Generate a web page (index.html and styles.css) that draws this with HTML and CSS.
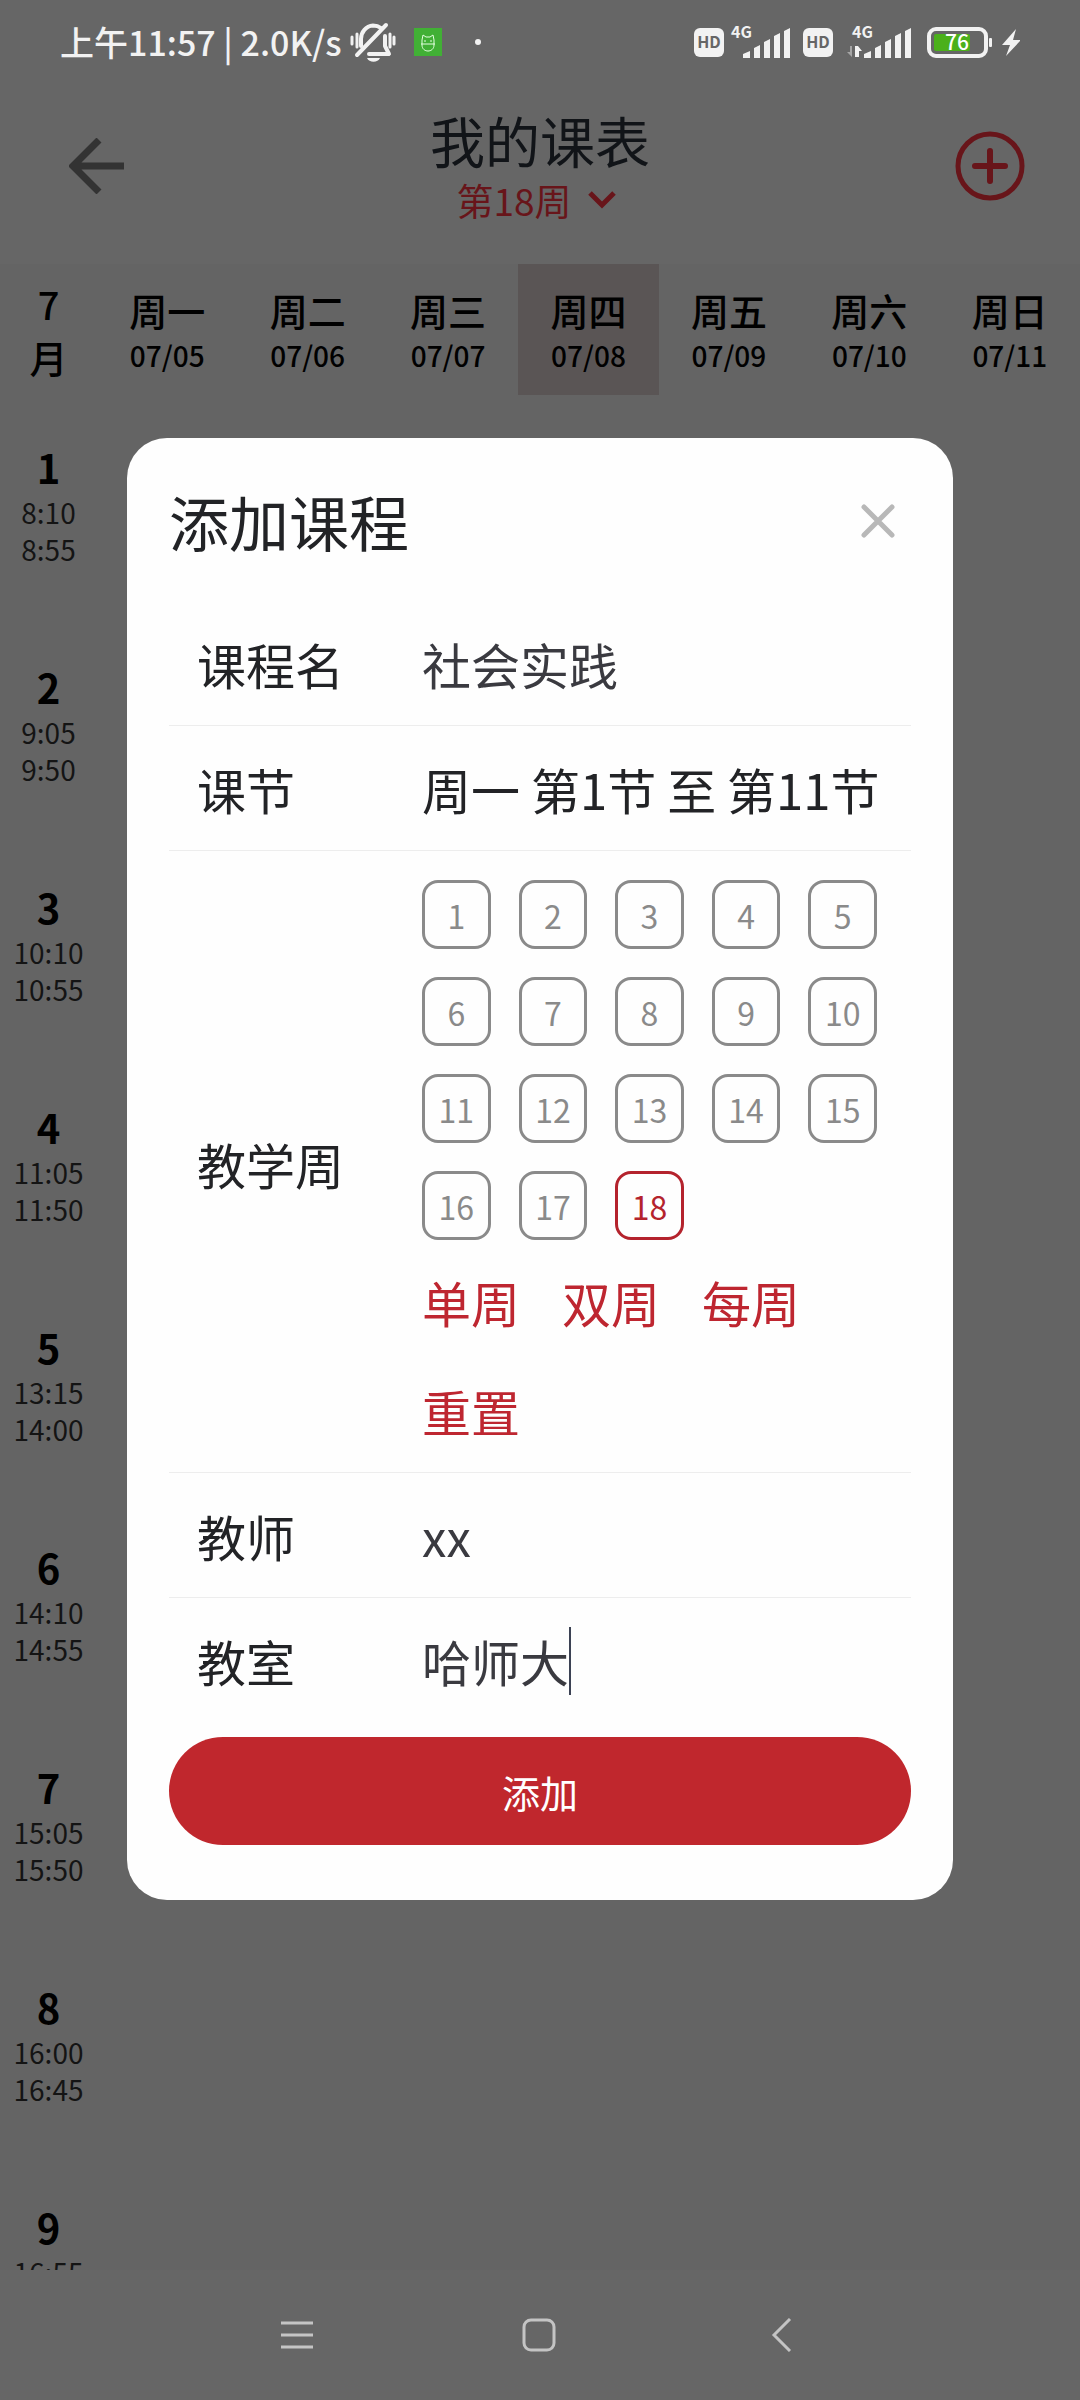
FILE: index.html
```html
<!DOCTYPE html>
<html lang="zh-CN">
<head>
<meta charset="utf-8">
<meta name="viewport" content="width=device-width, initial-scale=1">
<title>我的课表</title>
<link rel="stylesheet" href="styles.css">
</head>
<body>
<div class="screen">
  <div class="status">
    <div class="status-left">
      <span class="clock">上午11:57 | 2.0K/s</span>
      <svg class="bell" viewBox="0 0 46 40" width="46" height="40" fill="none" stroke="#f2f2f2" stroke-width="4" stroke-linecap="round">
        <path d="M11 24V17C11 10 16 4 23 3.500C26 3.500 29 4.500 31 6M35 14V24L39 32H19" stroke-linejoin="round"/>
        <path d="M36 3L7 33"/>
        <path d="M2 15V22M7 12V25M40 12V25M44 15V22" stroke-width="3"/>
        <path d="M17 36H30C28 41 19 41 17 36Z" fill="#f2f2f2" stroke="none"/>
      </svg>
      <svg class="app" viewBox="0 0 28 28" width="28" height="28" fill="none" stroke="#e4ffe0" stroke-width="1">
        <rect width="28" height="28" fill="#41b035" stroke="none"/>
        <path d="M8 12L9 7L12 9H16L19 7L20 12V17C20 21 17 23 14 23S8 21 8 17ZM7 16H21M11 12V14M17 12V14"/>
      </svg>
      <span class="dot"></span>
    </div>
    <svg class="signals" viewBox="0 0 330 44" width="330" height="44">
      <g fill="#f2f2f2">
        <rect x="4" y="8" width="30" height="29" rx="6"/>
        <rect x="113" y="8" width="30" height="29" rx="6"/>
        <text x="41" y="18" class="net">4G</text>
        <text x="162" y="18" class="net">4G</text>
        <path id="bars" d="M53 38V34L60 31V38ZM64 38V28L70 25V38ZM74 38V22L80 19V38ZM84 38V16L90 13V38ZM94 38V11L100 8V38Z"/>
        <use href="#bars" x="121"/>
        <path d="M165 37V26H168L172 31H169V37Z"/>
        <path d="M162 26V37L157 32H160V26Z" opacity=".45"/>
        <rect x="299" y="18" width="3" height="9" rx="1"/>
        <path d="M326 9L312 25H320L316 36L331 20H323Z"/>
      </g>
      <text x="19" y="28" class="hd">HD</text>
      <text x="128" y="28" class="hd">HD</text>
      <rect x="239" y="9" width="57" height="27" rx="7" fill="none" stroke="#f2f2f2" stroke-width="4"/>
      <rect x="244" y="14" width="36" height="17" rx="2" fill="#4bb01b"/>
      <text x="267" y="30" class="charge">76</text>
    </svg>
  </div>

  <header class="topbar">
    <button class="icon-button back" aria-label="返回">
      <svg viewBox="0 0 56 56" width="56" height="56" fill="none" stroke="#333" stroke-width="7"><path d="M30 2L4 28L30 54M4 28H55"/></svg>
    </button>
    <div class="heading">
      <h1>我的课表</h1>
      <button class="week-switch">第18周
        <svg viewBox="0 0 28 20" width="28" height="20" fill="none" stroke="#68151a" stroke-width="5"><path d="M2 3L14 15L26 3"/></svg>
      </button>
    </div>
    <button class="icon-button" aria-label="添加课程">
      <svg viewBox="0 0 72 72" width="72" height="72" fill="none" stroke="#68151a" stroke-width="5"><circle cx="36" cy="36" r="32"/><path d="M36 21V51M21 36H51" stroke-width="6" stroke-linecap="round"/></svg>
    </button>
  </header>

  <main class="timetable">
    <table>
      <thead>
        <tr>
          <th class="month">7<br>月</th>
          <th>周一<small>07/05</small></th>
          <th>周二<small>07/06</small></th>
          <th>周三<small>07/07</small></th>
          <th class="today">周四<small>07/08</small></th>
          <th>周五<small>07/09</small></th>
          <th>周六<small>07/10</small></th>
          <th>周日<small>07/11</small></th>
        </tr>
      </thead>
      <tbody>
        <tr><th>1<small>8:10<br>8:55</small></th><td colspan="7"></td></tr>
        <tr><th>2<small>9:05<br>9:50</small></th><td colspan="7"></td></tr>
        <tr><th>3<small>10:10<br>10:55</small></th><td colspan="7"></td></tr>
        <tr><th>4<small>11:05<br>11:50</small></th><td colspan="7"></td></tr>
        <tr><th>5<small>13:15<br>14:00</small></th><td colspan="7"></td></tr>
        <tr><th>6<small>14:10<br>14:55</small></th><td colspan="7"></td></tr>
        <tr><th>7<small>15:05<br>15:50</small></th><td colspan="7"></td></tr>
        <tr><th>8<small>16:00<br>16:45</small></th><td colspan="7"></td></tr>
        <tr><th>9<small>16:55</small></th><td colspan="7"></td></tr>
      </tbody>
    </table>
  </main>

  <nav class="system-nav">
    <button aria-label="最近任务"><svg viewBox="0 0 32 34" width="32" height="34" stroke="#c4c4c4" stroke-width="3"><path d="M0 5H32M0 17H32M0 29H32"/></svg></button>
    <button aria-label="主屏幕"><svg viewBox="0 0 34 34" width="34" height="34" fill="none" stroke="#c4c4c4" stroke-width="3"><rect x="2" y="2" width="30" height="30" rx="7"/></svg></button>
    <button aria-label="后退"><svg viewBox="0 0 34 34" width="34" height="34" fill="none" stroke="#c4c4c4" stroke-width="3"><path d="M25 1L9 17L25 33"/></svg></button>
  </nav>
</div>

<div class="overlay">
  <form class="dialog" role="dialog" aria-labelledby="dialog-title">
    <div class="dialog-head">
      <h2 id="dialog-title">添加课程</h2>
      <button type="button" class="icon-button" aria-label="关闭">
        <svg viewBox="0 0 34 34" width="34" height="34" stroke="#b8b8b8" stroke-width="5" stroke-linecap="round"><path d="M3 3L31 31M31 3L3 31"/></svg>
      </button>
    </div>
    <div class="row">
      <label for="course">课程名</label>
      <input id="course" class="field" type="text" value="社会实践">
    </div>
    <div class="row">
      <label for="period">课节</label>
      <button type="button" id="period" class="picker">周一 第1节 至 第11节</button>
    </div>
    <div class="row row-weeks">
      <span id="weeks-label" class="label">教学周</span>
      <div class="weeks-value" role="group" aria-labelledby="weeks-label">
        <div class="weeks">
          <label><input type="checkbox">1</label>
          <label><input type="checkbox">2</label>
          <label><input type="checkbox">3</label>
          <label><input type="checkbox">4</label>
          <label><input type="checkbox">5</label>
          <label><input type="checkbox">6</label>
          <label><input type="checkbox">7</label>
          <label><input type="checkbox">8</label>
          <label><input type="checkbox">9</label>
          <label><input type="checkbox">10</label>
          <label><input type="checkbox">11</label>
          <label><input type="checkbox">12</label>
          <label><input type="checkbox">13</label>
          <label><input type="checkbox">14</label>
          <label><input type="checkbox">15</label>
          <label><input type="checkbox">16</label>
          <label><input type="checkbox">17</label>
          <label><input type="checkbox" checked>18</label>
        </div>
        <div class="presets">
          <button type="button">单周</button>
          <button type="button">双周</button>
          <button type="button">每周</button>
          <button type="button">重置</button>
        </div>
      </div>
    </div>
    <div class="row">
      <label for="teacher">教师</label>
      <input id="teacher" class="field" type="text" value="xx">
    </div>
    <div class="row row-last">
      <label for="room">教室</label>
      <input id="room" class="field field-fit" type="text" size="3" value="哈师大">
      <span class="caret"></span>
    </div>
    <button type="button" class="submit">添加</button>
  </form>
</div>
</body>
</html>
```
FILE: styles.css
```css
* {
  box-sizing: border-box;
}

body {
  margin: 0;
  background: #646464;
  font-family: "Noto Sans CJK SC", sans-serif;
  color: #000;
}

button,
input {
  margin: 0;
  padding: 0;
  border: 0;
  background: none;
  font: inherit;
  color: inherit;
}

svg {
  display: block;
  flex: none;
}

.screen {
  height: 100vh;
  display: flex;
  flex-direction: column;
  overflow: hidden;
}

/* System status bar */
.status {
  flex: none;
  height: 84px;
  padding: 0 60px;
  display: flex;
  align-items: center;
  justify-content: space-between;
  background: #666;
  color: #f2f2f2;
}

.status-left {
  display: flex;
  align-items: center;
}

.clock {
  font-size: 34px;
  font-weight: 500;
  line-height: 40px;
  white-space: nowrap;
}

.bell {
  margin-left: 8px;
}

.app {
  margin-left: 18px;
}

.dot {
  width: 6px;
  height: 6px;
  margin-left: 33px;
  border-radius: 50%;
  background: #f2f2f2;
}

.net {
  font-size: 16px;
  font-weight: 700;
}

.hd {
  font-size: 16px;
  font-weight: 700;
  fill: #666;
  text-anchor: middle;
}

.charge {
  font-size: 21px;
  font-weight: 500;
  fill: #fff;
  text-anchor: middle;
}

/* App header */
.topbar {
  flex: none;
  height: 180px;
  padding: 0 54px 16px;
  display: grid;
  grid-template-columns: 1fr auto 1fr;
  align-items: center;
  background: #666;
}

.topbar .icon-button:last-child {
  justify-self: end;
}

.icon-button {
  justify-self: start;
}

.back {
  padding-left: 15px;
}

.heading {
  display: flex;
  flex-direction: column;
  align-items: center;
}

h1 {
  margin: 0;
  font-size: 55px;
  font-weight: 400;
  line-height: 68px;
  color: #111418;
}

.week-switch {
  display: flex;
  align-items: center;
  gap: 16px;
  padding-right: 8px;
  font-size: 37px;
  line-height: 54px;
  color: #68151a;
}

/* Timetable */
.timetable {
  flex: 1;
  min-height: 0;
  overflow: hidden;
}

table {
  width: 100%;
  table-layout: fixed;
  border-collapse: collapse;
}

th,
td {
  padding: 0;
}

th {
  font-weight: 500;
}

small {
  display: block;
  font-size: 28px;
}

thead th {
  height: 131px;
  padding-top: 4px;
  font-size: 38px;
  line-height: 46px;
}

thead small {
  line-height: 44px;
}

thead .month {
  width: 97px;
  padding-top: 0;
  line-height: 53px;
}

.today {
  background: #5a5555;
}

tbody tr {
  height: 220px;
}

tbody th {
  padding-top: 45px;
  vertical-align: top;
  font-size: 40px;
  font-weight: 700;
  line-height: 54px;
}

tbody small {
  font-weight: 400;
  line-height: 37px;
  color: #141414;
}

/* System navigation */
.system-nav {
  flex: none;
  height: 130px;
  display: flex;
  align-items: center;
  justify-content: center;
  gap: 209px;
  background: #666;
}

/* Add-course dialog */
.overlay {
  position: fixed;
  inset: 0;
  padding: 0 127px 62px;
  display: flex;
  align-items: center;
  justify-content: center;
}

.dialog {
  flex: 1;
  min-width: 0;
  max-width: 900px;
  padding: 40px 42px 55px;
  border-radius: 40px;
  background: #fefefe;
  color: #222326;
  font-size: 49px;
}

.dialog-head {
  display: flex;
  align-items: center;
  justify-content: space-between;
  padding-right: 16px;
  margin-bottom: 37px;
}

h2 {
  margin: 0;
  font-size: 60px;
  font-weight: 400;
  line-height: 86px;
}

.row {
  min-height: 125px;
  padding: 0 34px 0 28px;
  display: flex;
  align-items: center;
  border-bottom: 1px solid #ededed;
}

.row-last {
  border-bottom: 0;
}

.row > label,
.label {
  flex: none;
  width: 225px;
}

.field {
  flex: 1;
  min-width: 0;
  height: 72px;
  color: #3a3a40;
  outline: none;
}

.field-fit {
  flex: none;
  width: 3em;
}

.caret {
  width: 2px;
  height: 68px;
  background: #3c4254;
}

.picker {
  white-space: nowrap;
}

.row-weeks {
  padding-top: 29px;
  padding-bottom: 25px;
}

.weeks-value {
  flex: 1;
  min-width: 0;
}

.weeks {
  display: grid;
  grid-template-columns: repeat(5, 1fr);
  gap: 28px;
}

.weeks label {
  position: relative;
  height: 69px;
  display: grid;
  place-items: center;
  border: 3px solid #8a8a8a;
  border-radius: 16px;
  font-size: 32px;
  line-height: 40px;
  color: #8a8a8a;
}

.weeks label:has(:checked) {
  border-color: #b4232d;
  color: #b4232d;
}

.weeks input {
  position: absolute;
  inset: 0;
  opacity: 0;
}

.presets {
  margin-top: 26px;
  display: flex;
  flex-wrap: wrap;
  gap: 37px 42px;
  line-height: 72px;
  color: #be2630;
}

.submit {
  display: block;
  width: 100%;
  height: 108px;
  margin-top: 14px;
  border-radius: 54px;
  background: #c0272d;
  color: #fff;
  font-size: 38px;
}
```
